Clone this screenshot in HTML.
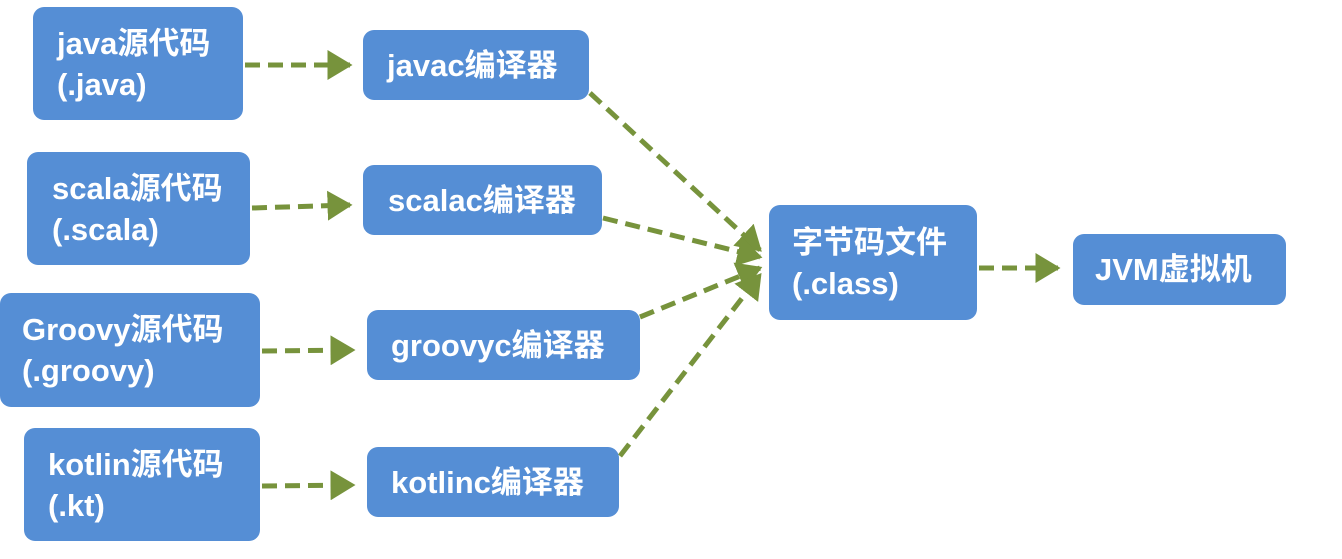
<!DOCTYPE html>
<html><head><meta charset="utf-8"><style>
body{margin:0;width:1342px;height:559px;background:#fff;position:relative;overflow:hidden;font-family:"Liberation Sans","Noto Sans CJK SC",sans-serif;font-weight:bold;color:#fff}
.b{position:absolute;background:#558ED5;border-radius:11px;box-sizing:border-box;font-size:31px;line-height:41px;display:flex;flex-direction:column;justify-content:center;white-space:nowrap}
svg{position:absolute;left:0;top:0}
</style></head><body>
<svg width="1342" height="559">
<defs><marker id="a" markerWidth="6" markerHeight="6" refX="4.5" refY="3" orient="auto" markerUnits="strokeWidth"><path d="M0,0 L5,3 L0,6 Z" fill="#77933C"/></marker></defs>
<g stroke="#77933C" stroke-width="5" stroke-dasharray="15 8" fill="none">
<line x1="245" y1="65" x2="350" y2="65" marker-end="url(#a)"/>
<line x1="252" y1="208" x2="350" y2="205" marker-end="url(#a)"/>
<line x1="262" y1="351" x2="353" y2="350" marker-end="url(#a)"/>
<line x1="262" y1="486" x2="353" y2="485" marker-end="url(#a)"/>
<line x1="979" y1="268" x2="1058" y2="268" marker-end="url(#a)"/>
<line x1="590" y1="93" x2="760" y2="250" marker-end="url(#a)"/>
<line x1="603" y1="218" x2="760" y2="257" marker-end="url(#a)"/>
<line x1="640" y1="317" x2="760" y2="268" marker-end="url(#a)"/>
<line x1="620" y1="456" x2="760" y2="275" marker-end="url(#a)"/>
</g>
</svg>
<div class="b" style="left:33px;top:7px;width:210px;height:113px;padding-left:24px">java源代码<span>(.java)</span></div>
<div class="b" style="left:363px;top:30px;width:226px;height:70px;padding-left:24px">javac编译器</div>
<div class="b" style="left:27px;top:152px;width:223px;height:113px;padding-left:25px">scala源代码<span>(.scala)</span></div>
<div class="b" style="left:363px;top:165px;width:239px;height:70px;padding-left:25px">scalac编译器</div>
<div class="b" style="left:0px;top:293px;width:260px;height:114px;padding-left:22px">Groovy源代码<span>(.groovy)</span></div>
<div class="b" style="left:367px;top:310px;width:273px;height:70px;padding-left:24px">groovyc编译器</div>
<div class="b" style="left:24px;top:428px;width:236px;height:113px;padding-left:24px">kotlin源代码<span>(.kt)</span></div>
<div class="b" style="left:367px;top:447px;width:252px;height:70px;padding-left:24px">kotlinc编译器</div>
<div class="b" style="left:769px;top:205px;width:208px;height:115px;padding-left:23px">字节码文件<span>(.class)</span></div>
<div class="b" style="left:1073px;top:234px;width:213px;height:71px;padding-left:22px">JVM虚拟机</div>
</body></html>
